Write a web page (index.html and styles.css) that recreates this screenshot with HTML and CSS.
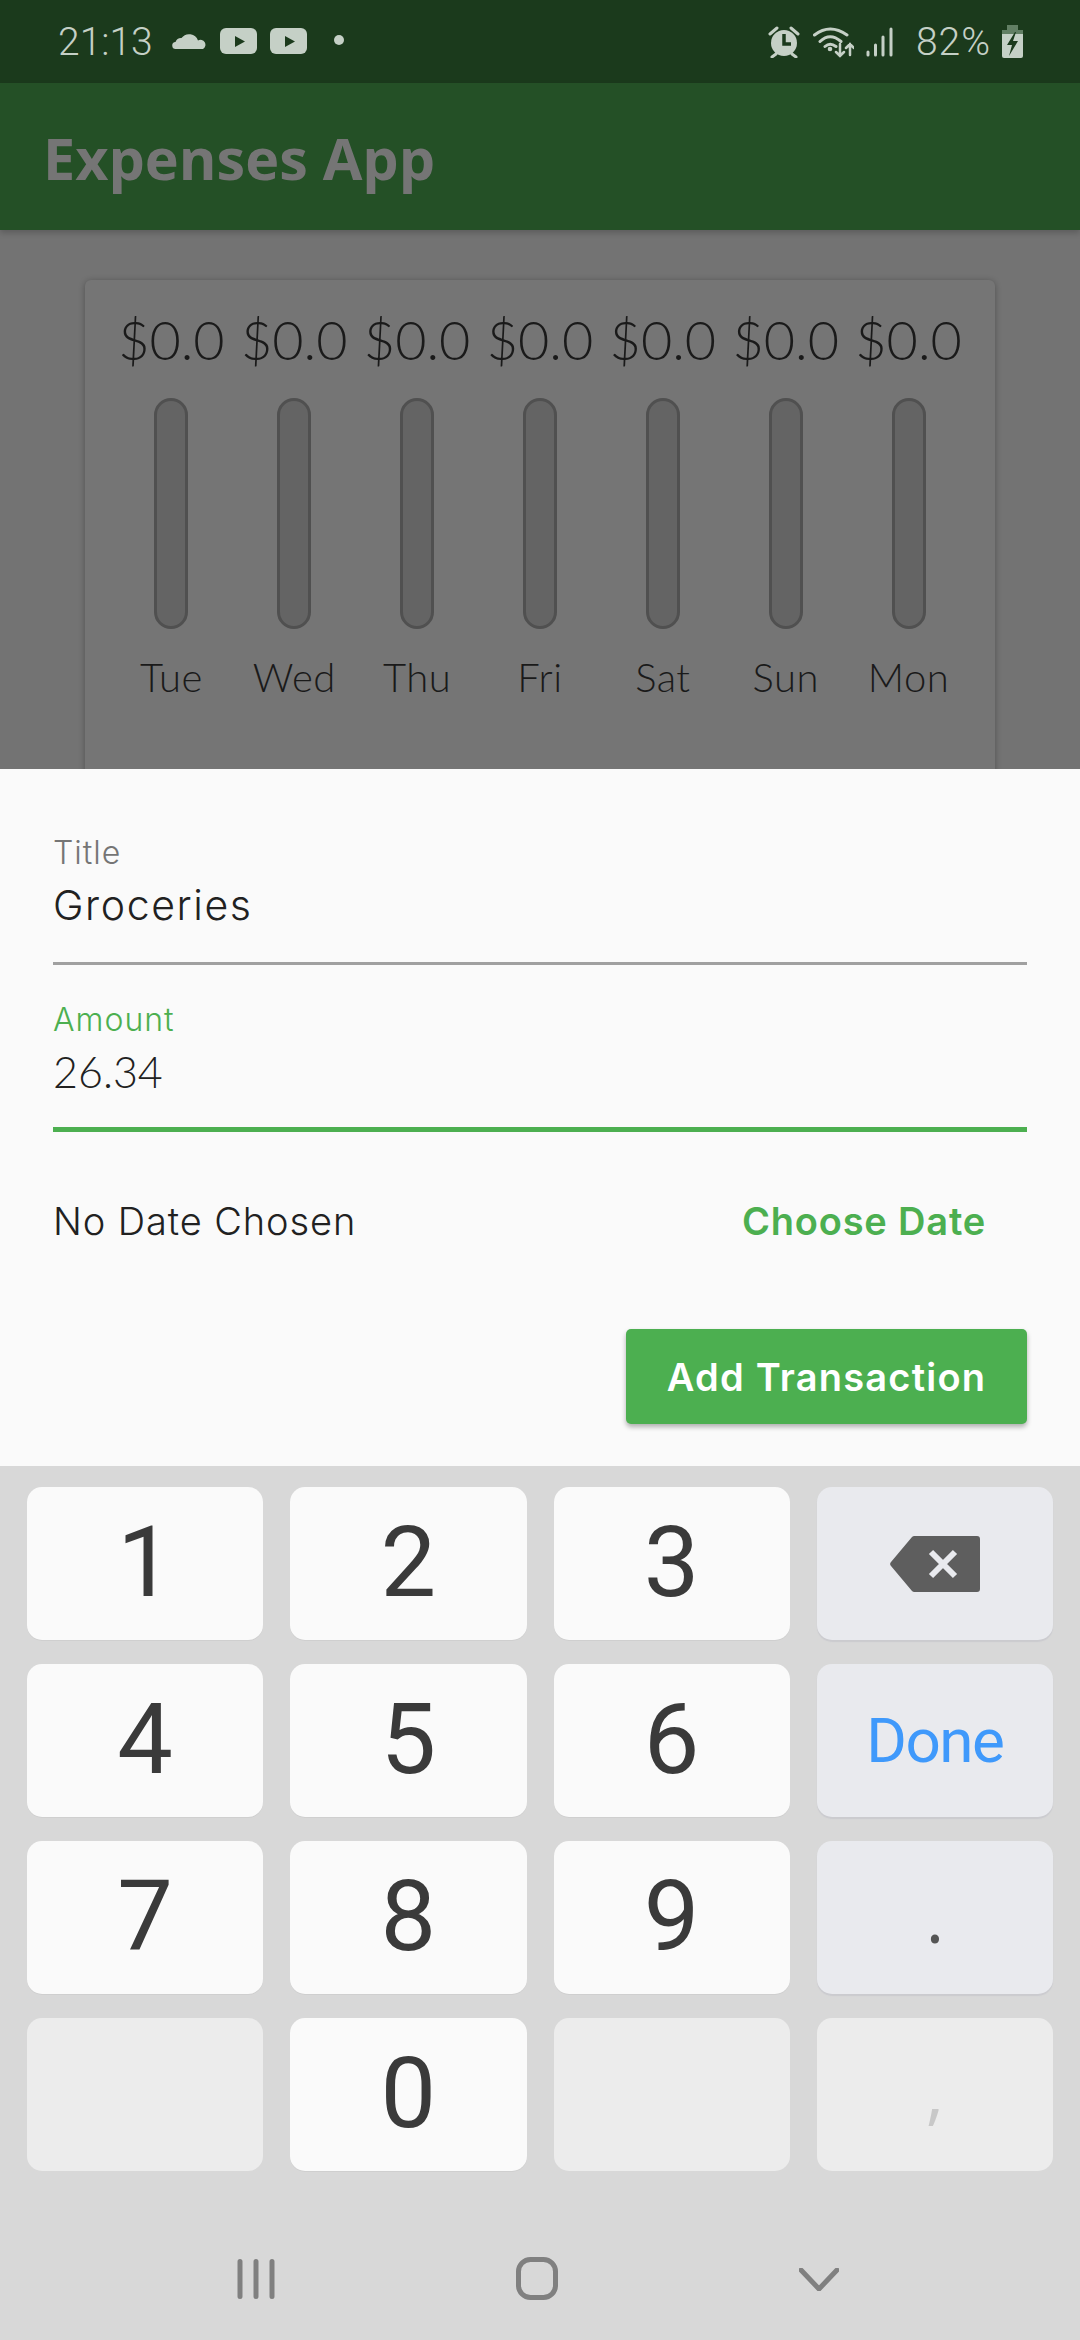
FILE: index.html
```html
<!DOCTYPE html>
<html>
<head>
    <title>Expenses App</title>
    <link rel="stylesheet" href="styles.css">
</head>
<body>
<div id="app">
    <div class="status-bar">
        <span class="clock">21:13</span>
        <svg class="ic-cloud" viewBox="0 0 34 20"><path d="M4 19a3.500 3.500 0 0 1-.5-7 6 6 0 0 1 6-4A9.500 9.500 0 0 1 26 10.500 4.300 4.300 0 0 1 31 19z"/></svg>
        <svg class="ic-yt" viewBox="0 0 37 26"><rect width="37" height="26" rx="6"/><path class="cut" d="M15 8v11l10-5.500z"/></svg>
        <svg class="ic-yt" viewBox="0 0 37 26"><rect width="37" height="26" rx="6"/><path class="cut" d="M15 8v11l10-5.500z"/></svg>
        <span class="dot"></span>
        <span class="status-right">
            <svg class="ic-alarm" viewBox="0 0 32 32"><circle cx="16" cy="17" r="13"/><path class="cut-line" d="M16 8v10h7"/><path class="line" d="M2 8l7-6M30 8l-7-6M4 31l4-3M28 31l-4-3"/></svg>
            <svg class="ic-wifi" viewBox="0 0 41 32"><path class="line" d="M1.500 9Q17-3 34 9M7 15.500Q17 6 28 15.500M12 20.500Q17 16 23 20.500"/><circle cx="17" cy="23" r="2.300"/><path class="line thin" d="M27 18v12M23 26l4 4 4-4M37 29V18M33 22l4-4 4 4"/></svg>
            <svg class="ic-signal" viewBox="0 0 27 30"><path class="line" d="M2 25v3M9.500 18v10M17 10v18M25 2v26"/></svg>
            <span class="battery-text">82%</span>
            <svg class="ic-battery" viewBox="0 0 21 33"><path class="cap" d="M5 0h11v5h5v5H0V5h5z"/><path d="M0 9h21v22a2 2 0 0 1-2 2H2a2 2 0 0 1-2-2z"/><path class="bolt" d="M13 7L5 20h5l-3 11 9-15h-5l3-9z"/></svg>
        </span>
    </div>

    <div class="app-bar">Expenses App</div>

    <div class="backdrop">
        <div class="chart-card">
            <div class="chart-col"><span class="amount">$0.0</span><span class="bar"></span><span class="day">Tue</span></div>
            <div class="chart-col"><span class="amount">$0.0</span><span class="bar"></span><span class="day">Wed</span></div>
            <div class="chart-col"><span class="amount">$0.0</span><span class="bar"></span><span class="day">Thu</span></div>
            <div class="chart-col"><span class="amount">$0.0</span><span class="bar"></span><span class="day">Fri</span></div>
            <div class="chart-col"><span class="amount">$0.0</span><span class="bar"></span><span class="day">Sat</span></div>
            <div class="chart-col"><span class="amount">$0.0</span><span class="bar"></span><span class="day">Sun</span></div>
            <div class="chart-col"><span class="amount">$0.0</span><span class="bar"></span><span class="day">Mon</span></div>
        </div>
    </div>

    <div class="sheet">
        <div class="field">
            <label>Title</label>
            <div class="value">Groceries</div>
        </div>
        <div class="field focused">
            <label>Amount</label>
            <div class="value number">26.34</div>
        </div>
        <div class="date-row">
            <span>No Date Chosen</span>
            <span class="choose-date">Choose Date</span>
        </div>
        <div class="submit-row">
            <span class="add-btn">Add Transaction</span>
        </div>
    </div>

    <div class="keyboard">
        <div class="keys">
            <div class="key">1</div>
            <div class="key">2</div>
            <div class="key">3</div>
            <div class="key side">
                <svg class="ic-backspace" viewBox="0 0 90 56"><path d="M25 0h62a3 3 0 0 1 3 3v50a3 3 0 0 1-3 3H25a4 4 0 0 1-3-1L1 30a3 3 0 0 1 0-4L22 1a4 4 0 0 1 3-1z"/><path class="x" d="M41 16l24 24M65 16L41 40"/></svg>
            </div>
            <div class="key">4</div>
            <div class="key">5</div>
            <div class="key">6</div>
            <div class="key side done">Done</div>
            <div class="key">7</div>
            <div class="key">8</div>
            <div class="key">9</div>
            <div class="key side punct">.</div>
            <div class="key off"></div>
            <div class="key">0</div>
            <div class="key off"></div>
            <div class="key off punct">,</div>
        </div>
        <div class="nav-bar">
            <svg class="ic-recents" viewBox="0 0 38 40"><path d="M3 2.500v35M19 2.500v35M35 2.500v35"/></svg>
            <svg class="ic-home" viewBox="0 0 42 43"><rect x="2.500" y="2.500" width="37" height="38" rx="12"/></svg>
            <svg class="ic-back" viewBox="0 0 40 23"><path d="M2 2l18 19L38 2"/></svg>
        </div>
    </div>
</div>
</body>
</html>
```

FILE: styles.css
```css
* { box-sizing: border-box; }
body { margin: 0; font-family: "Open Sans", sans-serif; background: #fafafa; }
#app { width: 1080px; height: 2340px; display: flex; flex-direction: column; overflow: hidden; }

.status-bar { height: 83px; flex: none; background: #1b3a1c; display: flex; align-items: center; padding: 0 57px 0 58px; color: #c5d0c6; fill: #c5d0c6; }
.clock { font: 300 39px Roboto, sans-serif; margin-right: 19px; }
.ic-cloud { width: 34px; height: 20px; margin: -4px 14px 0 0; }
.ic-yt { width: 37px; height: 26px; margin: -2px 13px 0 0; }
.cut { fill: #1b3a1c; }
.dot { width: 10px; height: 10px; border-radius: 50%; background: #c5d0c6; margin: -4px 0 0 14px; }
.status-right { margin-left: auto; display: flex; align-items: center; }
.line { fill: none; stroke: #c5d0c6; stroke-width: 3; stroke-linecap: round; }
.line.thin { stroke-width: 2.5; }
.cut-line { fill: none; stroke: #1b3a1c; stroke-width: 3.5; }
.ic-alarm { width: 32px; height: 32px; margin-right: 13px; }
.ic-wifi { width: 41px; height: 32px; margin-right: 12px; }
.ic-signal { width: 27px; height: 30px; margin-right: 23px; }
.battery-text { font: 300 39px Roboto, sans-serif; letter-spacing: 1px; margin-right: 11px; }
.ic-battery { width: 21px; height: 33px; }
.cap { fill: #627f64; }
.bolt { fill: #1b3a1c; }

.app-bar { height: 147px; flex: none; background: #245026; color: #757575; font-size: 57.5px; font-weight: 700; display: flex; align-items: center; padding: 3px 0 0 43px; position: relative; box-shadow: 0 3px 6px rgba(0, 0, 0, 0.2); }

.backdrop { height: 539px; flex: none; background: #737373; padding: 50px 85px 0; overflow: hidden; }
.chart-card { height: 600px; background: #757575; border-radius: 6px; box-shadow: 0 1px 6px rgba(0, 0, 0, 0.3); padding: 28px 25px; display: grid; grid-template-columns: repeat(7, 1fr); }
.chart-col { display: flex; flex-direction: column; align-items: center; color: #1a1a1a; font-family: Lato, sans-serif; font-weight: 300; }
.amount { font-size: 54px; line-height: 64px; white-space: nowrap; }
.bar { width: 34px; height: 231px; margin-top: 26px; border: 3px solid #505050; border-radius: 17px; background: #646464; }
.day { font-size: 40px; line-height: 48px; margin-top: 24px; letter-spacing: 0.5px; }

.sheet { height: 697px; flex: none; background: #fafafa; padding: 29px 53px 0; font-family: Inter, sans-serif; font-weight: 300; color: #212121; }
.field { border-bottom: 3px solid #a0a0a0; height: 167px; padding-top: 35px; }
.field label { display: block; font-size: 32px; line-height: 40px; letter-spacing: 1px; color: #757575; }
.field .value { font-size: 41px; line-height: 54px; margin-top: 5px; letter-spacing: 1.6px; }
.field .value.number { font-family: Lato, sans-serif; font-size: 43px; letter-spacing: 0; }
.field.focused { border-bottom: 5px solid #4caf50; }
.field.focused label { color: #4caf50; }
.date-row { display: flex; justify-content: space-between; align-items: center; padding: 64px 41px 0 0; font-size: 38px; line-height: 50px; letter-spacing: 0.9px; }
.choose-date { color: #4caf50; font-weight: 600; letter-spacing: 0.8px; }
.submit-row { display: flex; justify-content: flex-end; margin-top: 83px; }
.add-btn { width: 401px; height: 95px; background: #4caf50; color: #fff; font-weight: 600; font-size: 38px; letter-spacing: 1.2px; border-radius: 5px; display: flex; align-items: center; justify-content: center; box-shadow: 0 3px 5px rgba(0, 0, 0, 0.3); }

.keyboard { flex: 1; background: #d8d8d8; display: flex; flex-direction: column; padding: 21px 27px 0; }
.keys { display: grid; grid-template-columns: repeat(4, 1fr); grid-auto-rows: 153px; column-gap: 27px; row-gap: 24px; }
.key { background: #fafafa; border-radius: 15px; display: flex; align-items: center; justify-content: center; font: 400 99px Roboto, sans-serif; color: #3a3a3a; padding-bottom: 3px; box-shadow: 0 1px 0 #cfcfcf; }
.key.side { background: #e9eaee; box-shadow: 0 2px 1px #cbcbcf; }
.key.off { background: #ececec; box-shadow: none; }
.done { font-size: 62px; letter-spacing: -1.5px; color: #3f99fb; padding-bottom: 0; }
.key.punct { font: 400 70px/70px "Open Sans", sans-serif; align-items: flex-end; padding-bottom: 43px; color: #555; }
.key.off.punct { color: #c8c8c8; padding-bottom: 46px; }
.ic-backspace { width: 90px; height: 56px; fill: #5e5e5e; margin-top: 3px; }
.x { stroke: #e9eaee; stroke-width: 6; fill: none; }

.nav-bar { flex: 1; display: flex; align-items: center; justify-content: space-between; padding: 46px 214px 0 210px; }
.nav-bar svg { fill: none; stroke: #808080; stroke-width: 5; stroke-linecap: round; }
.ic-recents { width: 38px; height: 40px; }
.ic-home { width: 42px; height: 43px; }
.ic-back { width: 40px; height: 23px; margin-top: 1px; }
```
